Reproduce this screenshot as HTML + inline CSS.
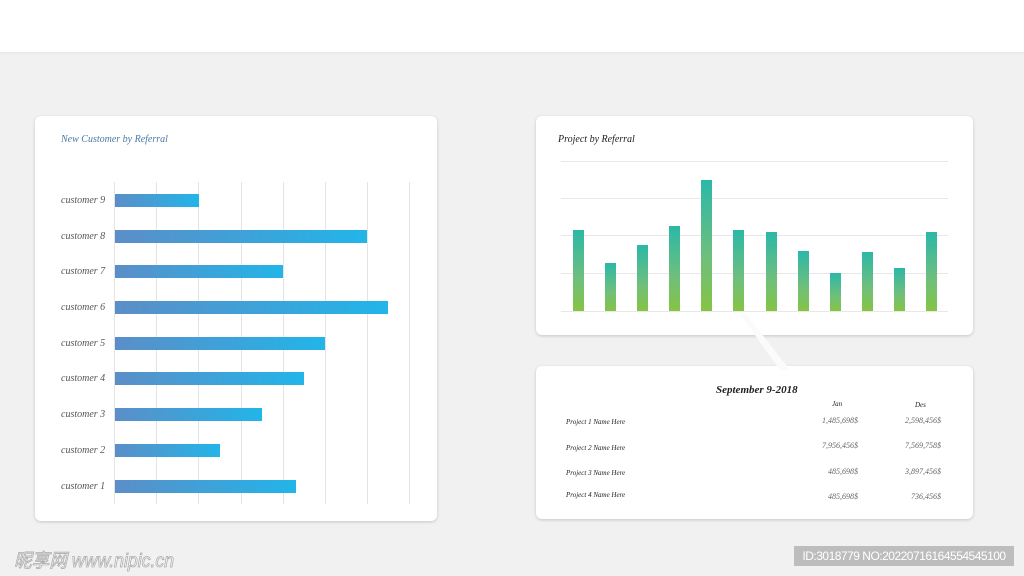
<!DOCTYPE html>
<html><head><meta charset="utf-8"><style>
body{margin:0;width:1024px;height:576px;background:#f1f1f1;position:relative;overflow:hidden;font-family:"Liberation Serif",serif;}
.hdr{position:absolute;left:0;top:0;width:1024px;height:52px;background:#fff;box-shadow:0 1px 4px rgba(0,0,0,.06);}
.card{position:absolute;background:#fff;border-radius:6px;box-shadow:0 1px 3px rgba(0,0,0,.18);}
.t{position:absolute;font-style:italic;white-space:nowrap;}
.vl{position:absolute;top:182px;height:322px;width:1px;background:#e4e4e4;}
.hb{position:absolute;left:115px;height:13px;background:linear-gradient(90deg,#5b8ec8,#22b5e8);}
.lab{position:absolute;left:61px;font-size:10px;color:#555;font-style:italic;}
.gl{position:absolute;left:561px;width:387px;height:1px;background:#e8e8e8;}
.vb{position:absolute;width:11px;bottom:265px;background:linear-gradient(180deg,#2bb8a8,#6fbf7c 60%,#85c443);}
.r{position:absolute;font-size:8px;font-style:italic;color:#222;}
.n{position:absolute;font-size:8px;font-style:italic;color:#666;width:70px;text-align:right;}
</style></head><body>
<div class="hdr"></div>
<div class="card" style="left:35px;top:116px;width:402px;height:405px"></div>
<div class="t" style="left:61px;top:134px;font-size:10px;color:#4a79a8">New Customer by Referral</div>
<div class="vl" style="left:114px"></div><div class="vl" style="left:156px"></div><div class="vl" style="left:198px"></div><div class="vl" style="left:241px"></div><div class="vl" style="left:283px"></div><div class="vl" style="left:325px"></div><div class="vl" style="left:367px"></div><div class="vl" style="left:409px"></div>
<div class="lab" style="top:195px">customer 9</div><div class="hb" style="top:194px;width:84px"></div>
<div class="lab" style="top:231px">customer 8</div><div class="hb" style="top:230px;width:252px"></div>
<div class="lab" style="top:266px">customer 7</div><div class="hb" style="top:265px;width:168px"></div>
<div class="lab" style="top:302px">customer 6</div><div class="hb" style="top:301px;width:273px"></div>
<div class="lab" style="top:338px">customer 5</div><div class="hb" style="top:337px;width:210px"></div>
<div class="lab" style="top:373px">customer 4</div><div class="hb" style="top:372px;width:189px"></div>
<div class="lab" style="top:409px">customer 3</div><div class="hb" style="top:408px;width:147px"></div>
<div class="lab" style="top:445px">customer 2</div><div class="hb" style="top:444px;width:105px"></div>
<div class="lab" style="top:481px">customer 1</div><div class="hb" style="top:480px;width:181px"></div>

<div class="card" style="left:536px;top:116px;width:437px;height:219px"></div>
<div class="t" style="left:558px;top:134px;font-size:10px;color:#222">Project by Referral</div>
<div class="gl" style="top:161px"></div><div class="gl" style="top:198px"></div><div class="gl" style="top:235px"></div><div class="gl" style="top:273px"></div><div class="gl" style="top:311px"></div>
<div class="vb" style="left:573px;top:230px"></div><div class="vb" style="left:605px;top:263px"></div><div class="vb" style="left:637px;top:245px"></div><div class="vb" style="left:669px;top:226px"></div><div class="vb" style="left:701px;top:180px"></div><div class="vb" style="left:733px;top:230px"></div><div class="vb" style="left:766px;top:232px"></div><div class="vb" style="left:798px;top:251px"></div><div class="vb" style="left:830px;top:273px"></div><div class="vb" style="left:862px;top:252px"></div><div class="vb" style="left:894px;top:268px"></div><div class="vb" style="left:926px;top:232px"></div>

<div class="card" style="left:536px;top:366px;width:437px;height:153px"></div>
<svg style="position:absolute;left:0;top:0" width="1024" height="576"><polygon points="740,314 746,314 790,370 780,370" fill="#fbfbfb"/></svg>
<div class="t" style="left:716px;top:384px;font-size:11px;font-weight:bold;color:#222">September 9-2018</div>
<div class="r" style="left:832px;top:400px;font-size:7px">Jan</div>
<div class="r" style="left:915px;top:401px;font-size:7px">Des</div>
<div class="r" style="left:566px;top:418px;font-size:7px">Project 1 Name Here</div>
<div class="r" style="left:566px;top:444px;font-size:7px">Project 2 Name Here</div>
<div class="r" style="left:566px;top:469px;font-size:7px">Project 3 Name Here</div>
<div class="r" style="left:566px;top:491px;font-size:7px">Project 4 Name Here</div>
<div class="n" style="left:788px;top:416px">1,485,698$</div><div class="n" style="left:871px;top:416px">2,598,456$</div>
<div class="n" style="left:788px;top:441px">7,956,456$</div><div class="n" style="left:871px;top:441px">7,569,758$</div>
<div class="n" style="left:788px;top:467px">485,698$</div><div class="n" style="left:871px;top:467px">3,897,456$</div>
<div class="n" style="left:788px;top:492px">485,698$</div><div class="n" style="left:871px;top:492px">736,456$</div>

<div style="position:absolute;left:14px;top:546px;font-family:'Liberation Sans','Noto Sans CJK SC',sans-serif;font-size:19px;font-style:italic;color:#fff;-webkit-text-stroke:0.8px #aaa;transform:scaleX(0.93);transform-origin:0 0">昵享网 www.nipic.cn</div>
<div style="position:absolute;left:794px;top:546px;width:220px;height:20px;background:#bdbdbd;color:#fff;font-family:'Liberation Sans',sans-serif;font-size:12px;line-height:20px;text-align:center;letter-spacing:-0.5px">ID:3018779 NO:20220716164554545100</div>
</body></html>
